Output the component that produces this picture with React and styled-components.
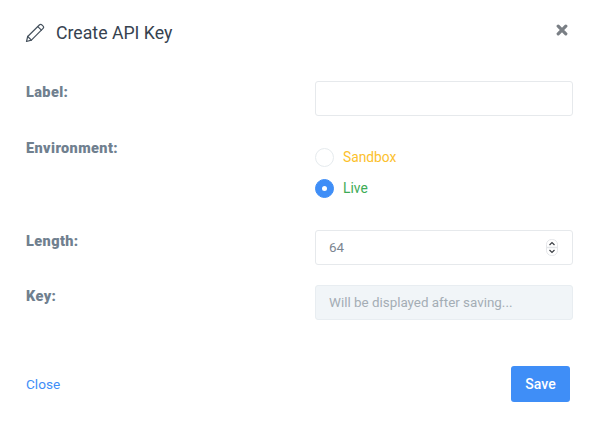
import React, { useState } from "react";
import styled, { createGlobalStyle } from "styled-components";

const GlobalStyle = createGlobalStyle`
  html, body {
    margin: 0;
    padding: 0;
    background: #fff;
    font-family: Roboto, "Liberation Sans", sans-serif;
  }
`;

const Modal = styled.div`
  width: 600px;
  height: 426px;
  box-sizing: border-box;
  padding: 0 27px 0 26px;
  display: flex;
  flex-direction: column;
`;

const Header = styled.div`
  height: 65px;
  display: flex;
  align-items: center;
  justify-content: space-between;
`;

const Title = styled.h4`
  margin: 0 0 0 -1px;
  display: flex;
  align-items: center;
  gap: 11px;
  font-size: 17.7px;
  font-weight: 400;
  color: #36424f;
`;

const CloseIcon = styled.button`
  border: 0;
  padding: 0;
  margin: 0 5px 6px 0;
  background: none;
  display: flex;
  cursor: pointer;
`;

const Form = styled.div`
  margin-top: 16px;
  display: flex;
  flex-direction: column;
`;

const Row = styled.div`
  display: grid;
  grid-template-columns: 289px 258px;
  margin-bottom: ${(p) => p.$gap}px;
`;

const Label = styled.label`
  padding-top: 2px;
  font-size: 14.5px;
  font-weight: 900;
  letter-spacing: 0.4px;
  line-height: 20px;
  color: #70808f;
`;

const Field = styled.div`
  position: relative;
  display: flex;
`;

const Input = styled.input`
  width: 100%;
  height: 35px;
  box-sizing: border-box;
  padding: 0 13px;
  border: 1px solid ${(p) => (p.disabled ? "#e8edf1" : "#e6e9ec")};
  border-radius: 3px;
  outline: none;
  font-family: inherit;
  font-size: 13.4px;
  color: #7b8590;
  background: ${(p) => (p.disabled ? "#f1f5f8" : "#fff")};

  &::placeholder {
    color: #a4adb5;
    opacity: 1;
  }
`;

const Spinner = styled.svg`
  position: absolute;
  right: 15px;
  top: 9px;
`;

const RadioGroup = styled.div`
  display: flex;
  flex-direction: column;
  gap: 11px;
  padding-top: 10px;
`;

const RadioRow = styled.label`
  display: flex;
  align-items: center;
  gap: 9px;
  height: 20px;
  font-size: 13.8px;
  color: ${(p) => p.$color};
  cursor: pointer;
`;

const RadioDot = styled.span`
  width: 19px;
  height: 19px;
  box-sizing: border-box;
  border-radius: 50%;
  border: 1px solid ${(p) => (p.$checked ? "#3f8ef7" : "#e6ebee")};
  background: ${(p) => (p.$checked ? "#3f8ef7" : "#fff")};
  display: flex;
  align-items: center;
  justify-content: center;

  &::after {
    content: "";
    width: 5px;
    height: 5px;
    border-radius: 50%;
    background: #fff;
    display: ${(p) => (p.$checked ? "block" : "none")};
  }
`;

const Footer = styled.div`
  margin-top: 46px;
  padding-right: 3px;
  display: flex;
  align-items: center;
  justify-content: space-between;
`;

const CloseLink = styled.a`
  font-size: 13.6px;
  color: #3f8ef7;
  cursor: pointer;
`;

const SaveButton = styled.button`
  width: 59px;
  height: 36px;
  border: 0;
  border-radius: 3px;
  background: #3f8ef7;
  color: #fff;
  font-family: inherit;
  font-size: 14px;
  font-weight: 500;
  cursor: pointer;
`;

const PencilIcon = () => (
  <svg width="20" height="20" viewBox="0 0 20 20" fill="none" stroke="#46525e" strokeWidth="1.2" strokeLinejoin="round" strokeLinecap="round">
    <path d="M1.5 18.5l1.2-5L14.6 1.8a1.6 1.6 0 0 1 2.2 0l1.3 1.3a1.6 1.6 0 0 1 0 2.2L6.4 17.2z" />
    <path d="M2.7 13.5l3.7 3.7M12.8 3.6l3.6 3.6" />
  </svg>
);

const TimesIcon = () => (
  <svg width="12" height="12" viewBox="0 0 12 12">
    <path d="M2.2 2.2l7.6 7.6M9.8 2.2l-7.6 7.6" stroke="#7a7f85" strokeWidth="3.2" strokeLinecap="round" />
  </svg>
);

const SpinnerIcon = () => (
  <Spinner width="12" height="17" viewBox="0 0 12 17" fill="none">
    <rect x="0.5" y="0.5" width="11" height="16" rx="5" fill="#fff" stroke="#e3e5e8" />
    <path d="M0.5 8.5h11" stroke="#e3e5e8" strokeWidth="1.5" />
    <path d="M3.5 6l2.5-2.5L8.5 6M3.5 11l2.5 2.5L8.5 11" stroke="#3b3f44" strokeWidth="1.2" />
  </Spinner>
);

const App = () => {
  const [env, setEnv] = useState("live");

  return (
    <Modal>
      <GlobalStyle />
      <Header>
        <Title>
          <PencilIcon />
          Create API Key
        </Title>
        <CloseIcon>
          <TimesIcon />
        </CloseIcon>
      </Header>

      <Form>
        <Row $gap={21}>
          <Label>Label:</Label>
          <Field>
            <Input />
          </Field>
        </Row>

        <Row $gap={32}>
          <Label>Environment:</Label>
          <RadioGroup>
            <RadioRow $color="#fcc12d" onClick={() => setEnv("sandbox")}>
              <RadioDot $checked={env === "sandbox"} />
              Sandbox
            </RadioRow>
            <RadioRow $color="#3dab56" onClick={() => setEnv("live")}>
              <RadioDot $checked={env === "live"} />
              Live
            </RadioRow>
          </RadioGroup>
        </Row>

        <Row $gap={20}>
          <Label>Length:</Label>
          <Field>
            <Input defaultValue="64" />
            <SpinnerIcon />
          </Field>
        </Row>

        <Row $gap={0}>
          <Label>Key:</Label>
          <Field>
            <Input disabled placeholder="Will be displayed after saving..." />
          </Field>
        </Row>
      </Form>

      <Footer>
        <CloseLink>Close</CloseLink>
        <SaveButton>Save</SaveButton>
      </Footer>
    </Modal>
  );
};

export default App;
